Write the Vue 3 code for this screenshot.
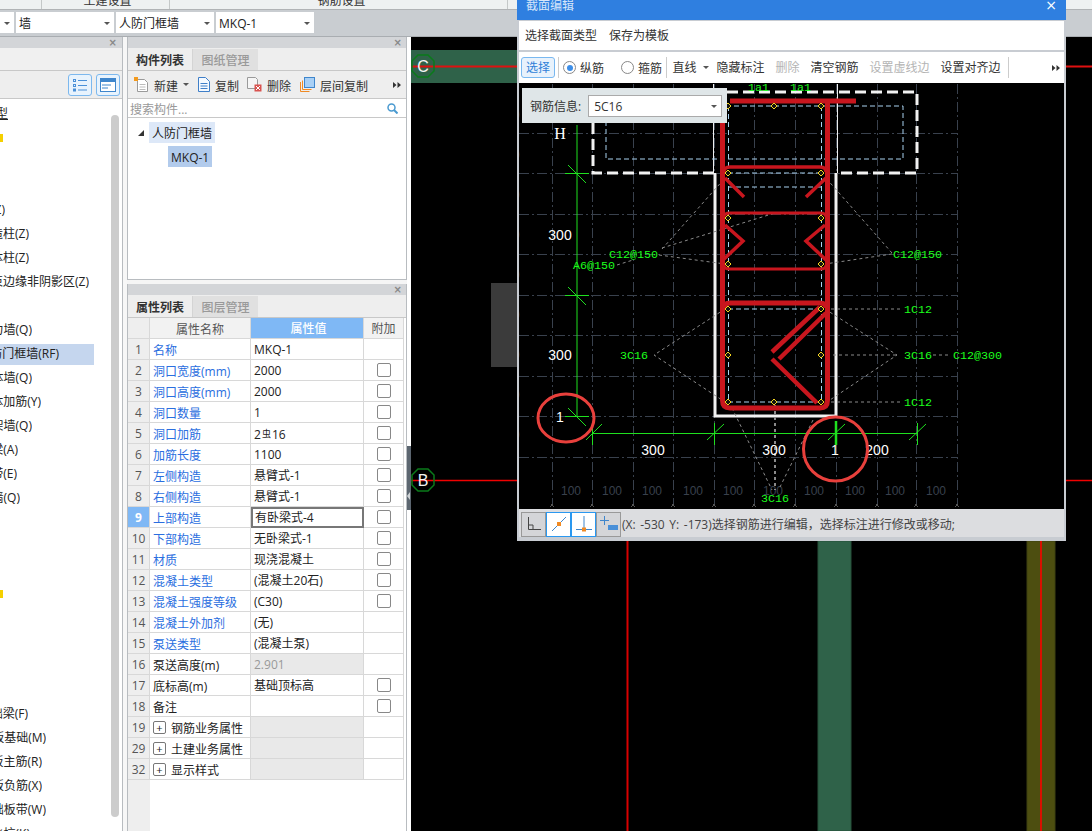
<template>
  <div class="app">
    <!-- clipped menu bar -->
    <div class="topbar">
      <div class="top-cell" style="width: 42px"></div>
      <div class="top-cell c1"><span>土建设置</span></div>
      <div class="top-cell c2"><span>钢筋设置</span></div>
    </div>

    <div class="selects">
      <div class="sel first"><i class="caret"></i></div>
      <div class="sel"><span>墙</span><i class="caret"></i></div>
      <div class="sel"><span>人防门框墙</span><i class="caret"></i></div>
      <div class="sel"><span>MKQ-1</span><i class="caret"></i></div>
    </div>

    <div class="main">
      <!-- left tree, cut by the window edge -->
      <div class="side">
        <div class="pane-head"><span class="close">×</span></div>
        <div class="side-blank"></div>
        <div class="side-tools">
          <span class="view-btn">
            <svg width="14" height="14" viewBox="0 0 14 14" fill="none" stroke="#4a90d8">
              <rect x="0.5" y="1.5" width="2" height="2" />
              <rect x="0.5" y="6.5" width="2" height="2" />
              <rect x="0.5" y="11" width="2" height="2" />
              <path d="M5 2.5h9M5 7.5h9M5 12h9" />
            </svg>
          </span>
          <span class="view-btn">
            <svg width="16" height="14" viewBox="0 0 16 14">
              <rect x="0.5" y="0.5" width="15" height="13" fill="#fff" stroke="#3f86cc" />
              <rect x="0" y="0" width="16" height="4" fill="#3f86cc" />
              <path d="M2 7h9M2 10h6" stroke="#3f86cc" />
            </svg>
          </span>
        </div>
        <div class="side-list">
          <div v-for="(item, i) in treeItems" :key="i" class="tree-row">
            <div
              class="tree-text"
              :class="{ on: item.on }"
              :style="{ width: item.on ? '94px' : item.end + 'px' }"
            >
              <span
                v-if="item.text"
                :class="{ under: item.under }"
                :style="item.on ? { marginRight: 94 - item.end + 'px' } : null"
              >{{ item.text }}</span>
              <i v-if="item.mark" class="mark"></i>
            </div>
          </div>
          <div class="side-scroll"></div>
        </div>
      </div>

      <div class="gutter"></div>

      <!-- component list + properties -->
      <div class="mid">
        <div class="pane comp">
          <div class="pane-head"><span class="close">×</span></div>
          <div class="tabs">
            <div class="tab active">构件列表</div>
            <div class="tab">图纸管理</div>
          </div>
          <div class="comp-tools">
            <span class="tool" style="margin-left: 6px">
              <svg width="15" height="15" viewBox="0 0 15 15" fill="none">
                <path d="M3.5 2.5h7l3 3v9h-10z" fill="#fff" stroke="#9a9a9a" />
                <path d="M5.5 7.5h6M5.5 10h6M5.5 12.5h6" stroke="#bcbcbc" />
                <path d="M0 0h4v4h-4z" fill="#f39a1e" />
              </svg>
              <span>新建</span>
            </span>
            <i class="caret small" style="margin: 0 8px 0 5px"></i>
            <span class="tool">
              <svg width="13" height="15" viewBox="0 0 13 15" fill="none" stroke="#3f7fc8">
                <path d="M1.5 0.5h7l4 4v10h-11z" fill="#f4f9ff" />
                <path d="M3.5 6.5h7M3.5 9h7M3.5 11.5h7" />
              </svg>
              <span>复制</span>
            </span>
            <span class="tool" style="margin-left: 8px">
              <svg width="15" height="15" viewBox="0 0 15 15">
                <path d="M0.5 0.5h8l2 2v9h-10z" fill="#f5f5f5" stroke="#9a9a9a" />
                <rect x="7.5" y="7.5" width="7" height="7" fill="#d9534f" />
                <path d="M9 9l4 4M13 9l-4 4" stroke="#fff" />
              </svg>
              <span>删除</span>
            </span>
            <span class="tool" style="margin-left: 9px">
              <svg width="15" height="15" viewBox="0 0 15 15">
                <path d="M0.5 5v9.5h9M2.5 3.5v9h9" fill="none" stroke="#f08a24" />
                <rect x="4.5" y="0.5" width="10" height="10" fill="#a9d0f5" stroke="#3f86cc" />
              </svg>
              <span>层间复制</span>
            </span>
            <svg class="more" width="8" height="6" viewBox="0 0 8 6" fill="#333">
              <path d="M0 0l3.500 3-3.500 3zM4.500 0l3.500 3-3.500 3z" />
            </svg>
          </div>
          <div class="search">
            <span>搜索构件...</span>
            <svg width="11" height="11" viewBox="0 0 11 11" fill="none" stroke="#4a9ad0" stroke-width="1.5">
              <circle cx="4.5" cy="4.5" r="3.5" />
              <path d="M7 7l3.500 3.500" stroke-width="2" />
            </svg>
          </div>
          <div class="comp-tree">
            <div class="node-row">
              <i class="tri"></i>
              <span class="node">人防门框墙</span>
            </div>
            <div class="node-row child">
              <span class="node picked">MKQ-1</span>
            </div>
          </div>
        </div>

        <div class="pane props">
          <div class="pane-head"><span class="close">×</span></div>
          <div class="tabs">
            <div class="tab active">属性列表</div>
            <div class="tab">图层管理</div>
          </div>
          <div class="grid-row head">
            <div class="c-idx"></div>
            <div class="c-name center">属性名称</div>
            <div class="c-val hl">属性值</div>
            <div class="c-add center">附加</div>
          </div>
          <div v-for="row in rows" :key="row.n" class="grid-row">
            <div class="c-idx" :class="{ cur: row.cur }">{{ row.n }}</div>
            <div class="c-name" :class="{ link: row.link }">
              <i v-if="row.group" class="plus">+</i>
              <span :class="{ 'group-text': row.group }">{{ row.name }}</span>
            </div>
            <div class="c-val" :class="{ gray: row.gray, edit: row.cur, dim: row.dim }">
              <template v-if="row.rebar">2<span class="rebar">虫</span>16</template>
              <template v-else>{{ row.val }}</template>
            </div>
            <div class="c-add"><i v-if="row.check" class="box"></i></div>
          </div>
          <div class="grid-rest"><div class="rest-idx"></div></div>
        </div>
      </div>

      <div class="handle"><div class="handle-bar"><i></i></div></div>

      <!-- CAD background -->
      <div class="canvas">
        <svg class="bg" width="681" height="794" viewBox="411 37 681 794">
          <rect x="411" y="50" width="106" height="33" fill="#2f6249" />
          <rect x="491" y="283" width="26" height="84" fill="#3b3b3b" />
          <rect x="818" y="541" width="33" height="290" fill="#2f6249" stroke="#26503b" />
          <rect x="1027" y="541" width="28" height="290" fill="#4d4e10" stroke="#3f4010" />
          <path d="M411 66.5H517M1066 66.5H1092" stroke="#e01010" stroke-width="2" />
          <path d="M411 480.5H517M1066 480.5H1092" stroke="#f00000" stroke-width="1.5" />
          <path d="M627.5 541V831" stroke="#d80000" stroke-width="2" />
          <path d="M1041 541V831" stroke="#d81000" stroke-width="2" />
          <polygon points="418,55 428,55 434,61 434,71 428,77 418,77 412,71 412,61" fill="none" stroke="#0a7a1a" stroke-width="1.5" />
          <polygon points="418,469 428,469 434,475 434,485 428,491 418,491 412,485 412,475" fill="none" stroke="#0a7a1a" stroke-width="1.5" />
          <text x="423" y="72" class="axis">C</text>
          <text x="423" y="486" class="axis">B</text>
        </svg>

        <!-- section editor window -->
        <div class="dialog">
          <div class="title">
            <span>截面编辑</span>
            <span class="title-x">×</span>
          </div>
          <div class="bar one">
            <span class="btn">选择截面类型</span>
            <span class="btn">保存为模板</span>
          </div>
          <div class="bar two">
            <span class="btn pick">选择</span>
            <i class="sep"></i>
            <label class="radio"><i class="dot on"></i>纵筋</label>
            <label class="radio wide"><i class="dot"></i>箍筋</label>
            <i class="sep last"></i>
            <span class="btn">直线</span>
            <i class="caret small" style="margin-left: 1px"></i>
            <span class="btn" style="margin-left: 2px">隐藏标注</span>
            <span class="btn off">删除</span>
            <span class="btn">清空钢筋</span>
            <span class="btn off">设置虚线边</span>
            <span class="btn">设置对齐边</span>
            <i class="sep" style="margin-left: 2px"></i>
            <svg class="bar-more" width="8" height="6" viewBox="0 0 8 6" fill="#333">
              <path d="M0 0l3.500 3-3.500 3zM4.500 0l3.500 3-3.500 3z" />
            </svg>
          </div>

          <div class="draw">
            <svg width="545" height="426" viewBox="519 83 545 426">
              <!-- grid -->
              <g stroke="#39414d" stroke-dasharray="10 3 2 3" fill="none">
                <path v-for="x in gridX" :key="'gx' + x" :d="`M${x + 0.5} 84V506`" />
                <path v-for="y in gridY" :key="'gy' + y" :d="`M519 ${y + 0.5}H958`" />
              </g>
              <text v-for="x in dimX" :key="'d' + x" :x="x" y="495" class="dim-text">100</text>
              <text v-for="y in dimY" :key="'e' + y" x="513" :y="y" class="dim-side">0</text>
              <path
                v-for="x in gridX"
                :key="'t' + x"
                :d="`M${x - 2} 507l3 -3M${x + 2} 507l-3 -3`"
                stroke="#555"
              />

              <!-- flange -->
              <path d="M714 173H593V92H917V173H836" fill="none" stroke="#f2f2f2" stroke-width="3" stroke-dasharray="11 5" />
              <path d="M713.5 84V173M837.5 84V173" stroke="#eee" />
              <path d="M715 173V416H836V173" fill="none" stroke="#f2f2f2" stroke-width="3" />
              <g stroke="#a9d2f0" stroke-dasharray="5 3" fill="none">
                <path d="M606 106H903V159H606Z" />
                <path d="M728.5 106V402M821.5 106V402" />
                <path d="M728 173H821M728 187H821M728 309H821M728 402H821" />
              </g>

              <!-- leaders -->
              <g stroke="#8a8a8a" stroke-dasharray="3 3" fill="none">
                <path d="M662 249L725 178M659 255L725 264M662 248L775 213M617 265L633 260" />
                <path d="M892 253L825 177M892 254L825 264" />
                <path d="M900 309H825M900 402H827" />
                <path d="M725 309L654 355L725 402" />
                <path d="M825 309L897 355L827 402M827 355H897M933 355H950" />
                <path d="M732 408L772 490M813 420L780 487" />
              </g>
              <path d="M775 405V490" stroke="#8a8a8a" stroke-width="2" stroke-dasharray="3 3" />

              <!-- rebar -->
              <g fill="none" stroke="#c8161e">
                <path d="M730 101H856" stroke-width="5" />
                <path d="M722.5 110V400Q722.5 408 730 408H820Q827.5 408 827.5 400V101" stroke-width="5" />
                <path d="M724 172Q724 167 730 167H820Q826 167 826 172" stroke-width="3.5" />
                <path d="M725 178L744 197M826 178L806 197" stroke-width="3.5" />
                <path d="M724 217Q724 213 730 213H820Q826 213 826 217" stroke-width="3" />
                <path d="M725 225L743 241L723 260M825 225L806 241L826 260" stroke-width="3.5" />
                <path d="M724 265Q724 269 730 269H820Q826 269 826 265" stroke-width="3" />
                <path d="M724 308Q724 303 730 303H820Q826 303 826 308" stroke-width="5" />
                <path d="M820 307L772 352M826 313L779 359M772 359L817 403" stroke-width="4.5" />
              </g>
              <g fill="#111" stroke="#f2d320">
                <polygon
                  v-for="(p, i) in nodes"
                  :key="'n' + i"
                  :points="`${p[0]},${p[1] - 3} ${p[0] + 3},${p[1]} ${p[0]},${p[1] + 3} ${p[0] - 3},${p[1]}`"
                />
              </g>

              <!-- dimensions -->
              <g stroke="#1fe01f" fill="none">
                <path d="M577 125V416" />
                <path d="M565 173.5H589M568 165L586 183M565 295.5H589M568 287L586 305M565 416.5H589M568 408L586 426" />
                <path d="M592 433.5H917" />
                <path d="M592.5 423V445M586 440L602 424M714.5 423V445M707 440L724 424M828 440L845 424M917.5 423V445M909 440L926 424" />
                <path d="M836 421V445" stroke-width="2.5" />
              </g>
              <text x="560" y="139" class="white serif">H</text>
              <text x="560" y="240" class="white">300</text>
              <text x="560" y="360" class="white">300</text>
              <text x="560" y="422" class="white">1</text>
              <text x="653" y="455" class="white">300</text>
              <text x="774" y="455" class="white">300</text>
              <text x="835" y="455" class="white">1</text>
              <text x="877" y="455" class="white">200</text>

              <text
                v-for="(t, i) in greenLabels"
                :key="'g' + i"
                :x="t.x"
                :y="t.y"
                class="green"
              >{{ t.text }}</text>

              <ellipse cx="566" cy="418" rx="28" ry="24" fill="none" stroke="#e8403c" stroke-width="3" />
              <circle cx="835.5" cy="449" r="32" fill="none" stroke="#e8403c" stroke-width="3" />
            </svg>

            <div class="info">
              <span>钢筋信息:</span>
              <div class="info-sel"><span>5C16</span><i class="caret small"></i></div>
            </div>
          </div>

          <div class="status">
            <span class="st-btn">
              <svg width="16" height="16" viewBox="0 0 16 16" fill="none" stroke="#444">
                <path d="M2.5 1V13.5H15M2.5 9H7V13.5" />
              </svg>
            </span>
            <span class="st-btn lit">
              <svg width="16" height="16" viewBox="0 0 16 16" fill="none">
                <path d="M1 15L15 1" stroke="#3f86cc" />
                <rect x="6" y="6" width="4" height="4" fill="#f08a24" />
              </svg>
            </span>
            <span class="st-btn lit">
              <svg width="16" height="16" viewBox="0 0 16 16" fill="none">
                <path d="M8 0V13M0 13.5H16" stroke="#3f86cc" />
                <rect x="6" y="11.5" width="4" height="4" fill="#f08a24" />
              </svg>
            </span>
            <span class="st-btn">
              <svg width="18" height="16" viewBox="0 0 18 16" fill="none">
                <path d="M4.5 0V9M0 4.5H9" stroke="#3f86cc" />
                <rect x="8" y="9" width="10" height="5" fill="#4a90d8" />
              </svg>
            </span>
            <span class="st-text">(X: -530 Y: -173)选择钢筋进行编辑，选择标注进行修改或移动;</span>
          </div>
        </div>
      </div>
    </div>
  </div>
</template>

<script setup>
const blank = { text: "", end: 0 };
const treeItems = [
  { text: "类型", end: 8, under: true },
  { text: "", end: 3, mark: true },
  blank,
  blank,
  { text: "柱(Z)", end: 5 },
  { text: "构造柱(Z)", end: 29 },
  { text: "砌体柱(Z)", end: 29 },
  { text: "约束边缘非阴影区(Z)", end: 89 },
  blank,
  { text: "剪力墙(Q)", end: 32 },
  { text: "人防门框墙(RF)", end: 59, on: true },
  { text: "砌体墙(Q)", end: 32 },
  { text: "砌体加筋(Y)", end: 41 },
  { text: "框架墙(Q)", end: 32 },
  { text: "暗梁(A)", end: 18 },
  { text: "暗带(E)", end: 17 },
  { text: "墙(Q)", end: 20 },
  blank,
  blank,
  blank,
  { text: "", end: 3, mark: true },
  blank,
  blank,
  blank,
  blank,
  { text: "基础梁(F)", end: 28 },
  { text: "筏板基础(M)", end: 46 },
  { text: "筏板主筋(R)", end: 42 },
  { text: "筏板负筋(X)", end: 42 },
  { text: "基础板带(W)", end: 46 },
  { text: "集水坑(K)", end: 30 },
];

const rows = [
  { n: 1, name: "名称", val: "MKQ-1", link: true },
  { n: 2, name: "洞口宽度(mm)", val: "2000", link: true, check: true },
  { n: 3, name: "洞口高度(mm)", val: "2000", link: true, check: true },
  { n: 4, name: "洞口数量", val: "1", link: true, check: true },
  { n: 5, name: "洞口加筋", rebar: true, link: true, check: true },
  { n: 6, name: "加筋长度", val: "1100", link: true, check: true },
  { n: 7, name: "左侧构造", val: "悬臂式-1", link: true, check: true },
  { n: 8, name: "右侧构造", val: "悬臂式-1", link: true, check: true },
  { n: 9, name: "上部构造", val: "有卧梁式-4", link: true, check: true, cur: true },
  { n: 10, name: "下部构造", val: "无卧梁式-1", link: true, check: true },
  { n: 11, name: "材质", val: "现浇混凝土", link: true, check: true },
  { n: 12, name: "混凝土类型", val: "(混凝土20石)", link: true, check: true },
  { n: 13, name: "混凝土强度等级", val: "(C30)", link: true, check: true },
  { n: 14, name: "混凝土外加剂", val: "(无)", link: true },
  { n: 15, name: "泵送类型", val: "(混凝土泵)", link: true },
  { n: 16, name: "泵送高度(m)", val: "2.901", gray: true, dim: true },
  { n: 17, name: "底标高(m)", val: "基础顶标高", check: true },
  { n: 18, name: "备注", val: "", check: true },
  { n: 19, name: "钢筋业务属性", val: "", group: true, gray: true },
  { n: 29, name: "土建业务属性", val: "", group: true, gray: true },
  { n: 32, name: "显示样式", val: "", group: true, gray: true },
];

const gridX = [552, 592, 633, 673, 714, 754, 795, 836, 877, 916, 957];
const gridY = [133, 173, 214, 254, 295, 335, 376, 416, 457];
const dimX = [561, 602, 642, 683, 723, 763, 804, 845, 885, 926];
const dimY = [119, 159, 199, 239, 279, 319, 359, 399, 439];

const nodes = [
  [728, 106], [774, 106], [821, 106],
  [728, 173], [821, 173],
  [728, 218], [821, 218],
  [728, 264], [821, 264],
  [728, 309], [821, 309],
  [728, 355], [821, 355],
  [728, 402], [774, 402], [821, 402],
];

const greenLabels = [
  { text: "C12@150", x: 609, y: 258 },
  { text: "A6@150", x: 573, y: 269 },
  { text: "C12@150", x: 893, y: 258 },
  { text: "1C12", x: 904, y: 313 },
  { text: "1C12", x: 904, y: 406 },
  { text: "3C16", x: 620, y: 359 },
  { text: "3C16", x: 904, y: 359 },
  { text: "C12@300", x: 953, y: 359 },
  { text: "3C16", x: 761, y: 502 },
  { text: "1a1", x: 748, y: 91 },
  { text: "1a1", x: 790, y: 91 },
];
</script>

<style scoped>
.app {
  width: 1092px;
  height: 831px;
  overflow: hidden;
  display: flex;
  flex-direction: column;
  font-family: "Open Sans", "Noto Sans CJK SC", sans-serif;
  font-size: 12px;
  color: #333;
  background: #f5f5f5;
}

.topbar {
  height: 10px;
  display: flex;
  background: #eef1f1;
  border-bottom: 1px solid #b0b3b5;
  box-sizing: border-box;
  overflow: hidden;
}
.top-cell {
  border-right: 1px solid #c4c8c8;
  line-height: 12px;
  box-sizing: border-box;
}
.top-cell span {
  display: block;
  margin-top: -5px;
  text-align: center;
}
.c1 {
  width: 128px;
  padding-left: 4px;
}
.c2 {
  width: 338px;
  padding-left: 6px;
}

.selects {
  height: 27px;
  display: flex;
  gap: 2px;
  align-items: center;
  background: #c9cdd1;
  border-bottom: 1px solid #a9adb1;
  box-sizing: border-box;
  padding-bottom: 1px;
}
.sel {
  width: 98px;
  height: 21px;
  background: #fff;
  display: flex;
  align-items: center;
  justify-content: space-between;
  padding: 1px 4px 0 3px;
  box-sizing: border-box;
  color: #222;
}
.sel.first {
  width: 14px;
  justify-content: flex-end;
}
.caret {
  width: 0;
  height: 0;
  border-left: 3px solid transparent;
  border-right: 3px solid transparent;
  border-top: 3px solid #555;
  display: inline-block;
}

.main {
  flex: 1;
  display: flex;
  min-height: 0;
}

.side {
  width: 123px;
  display: flex;
  flex-direction: column;
  border-right: 1px solid #b8bcc0;
  box-sizing: border-box;
  background: #fff;
}
.pane-head {
  height: 11px;
  flex: none;
  background: #d3d5d8;
  display: flex;
  justify-content: flex-end;
  align-items: center;
  padding-right: 4px;
}
.close {
  font-family: "DejaVu Sans", sans-serif;
  font-size: 10px;
  line-height: 11px;
  font-weight: bold;
  color: #888;
}
.side .close {
  margin-right: 1px;
}
.side-blank {
  height: 22px;
  background: #f0f0f0;
  border-bottom: 1px solid #c8c8c8;
}
.side-tools {
  height: 28px;
  flex: none;
  display: flex;
  gap: 4px;
  align-items: center;
  justify-content: flex-end;
  padding-right: 2px;
  background: #eee;
  border-bottom: 1px solid #c8c8c8;
  box-sizing: border-box;
}
.view-btn {
  width: 22px;
  height: 20px;
  border: 1px solid #7cb8ee;
  border-radius: 3px;
  background: #e8f3fd;
  display: flex;
  align-items: center;
  justify-content: center;
}
.side-list {
  flex: 1;
  position: relative;
  overflow: hidden;
  padding-top: 3px;
}
.tree-row {
  height: 24px;
  display: flex;
  align-items: center;
}
.tree-text {
  height: 21px;
  display: flex;
  justify-content: flex-end;
  align-items: center;
  white-space: nowrap;
  overflow: hidden;
  color: #222;
  flex: none;
}
.tree-text span {
  margin-top: -2px;
}
.tree-text.on {
  background: #c5d6ee;
}
.under {
  text-decoration: underline;
}
.mark {
  width: 3px;
  height: 8px;
  background: #f5d000;
  display: block;
}
.side-scroll {
  position: absolute;
  left: 111px;
  top: 16px;
  width: 8px;
  height: 702px;
  border-radius: 4px;
  background: #ccc;
}

.gutter {
  width: 4px;
  background: #f7f7f7;
}

.mid {
  width: 280px;
  display: flex;
  flex-direction: column;
  gap: 4px;
}
.pane {
  border: solid #b8bcc0;
  border-width: 0 1px;
  display: flex;
  flex-direction: column;
  background: #fff;
  box-sizing: border-box;
}
.pane.comp {
  height: 243px;
  border-bottom-width: 1px;
}
.pane.props {
  flex: 1;
  min-height: 0;
}
.tabs {
  height: 23px;
  flex: none;
  display: flex;
  background: #eee;
  padding-top: 1px;
  box-sizing: border-box;
  border-bottom: 1px solid #c8c8c8;
}
.tab {
  width: 65px;
  text-align: center;
  line-height: 24px;
  color: #999;
  background: #e0e0e0;
  font-weight: 500;
}
.tab.active {
  color: #333;
  background: #eee;
  font-weight: 700;
  border-right: 1px solid #d4d4d4;
  box-sizing: border-box;
}
.comp-tools {
  height: 28px;
  flex: none;
  display: flex;
  align-items: center;
  background: #eee;
  border-bottom: 1px solid #c8c8c8;
  box-sizing: border-box;
  position: relative;
}
.tool {
  display: flex;
  align-items: center;
  gap: 5px;
}
.tool span {
  padding-top: 2px;
}
.more {
  position: absolute;
  left: 265px;
  top: 11px;
}
.search {
  height: 19px;
  flex: none;
  display: flex;
  justify-content: space-between;
  align-items: center;
  padding: 1px 8px 0 2px;
  color: #999;
  border-bottom: 1px solid #c8c8c8;
  box-sizing: border-box;
}
.comp-tree {
  flex: 1;
  padding-top: 4px;
}
.node-row {
  height: 21px;
  margin-bottom: 3px;
  display: flex;
  align-items: center;
  padding-left: 10px;
}
.node-row.child {
  padding-left: 40px;
}
.tri {
  width: 0;
  height: 0;
  border-bottom: 6px solid #333;
  border-left: 6px solid transparent;
  margin-right: 5px;
}
.node {
  height: 21px;
  line-height: 23px;
  padding: 0 3px;
  background: #dde8f8;
  color: #222;
}
.node.picked {
  background: #b2cbec;
}

.grid-row {
  height: 21px;
  flex: none;
  display: flex;
  margin-right: 2px;
  border-bottom: 1px solid #d8d8d8;
  box-sizing: border-box;
  color: #222;
}
.grid-row.head {
  color: #555;
  background: #f2f2f2;
}
.c-idx {
  width: 22px;
  flex: none;
  background: #eee;
  text-align: center;
  line-height: 22px;
  color: #555;
  border-right: 1px solid #d8d8d8;
  box-sizing: border-box;
}
.c-idx.cur {
  background: #7fb8f5;
  color: #fff;
  font-weight: 700;
}
.c-name {
  width: 101px;
  flex: none;
  display: flex;
  align-items: center;
  padding: 1px 0 0 3px;
  box-sizing: border-box;
  border-right: 1px solid #d8d8d8;
  white-space: nowrap;
}
.c-name.link {
  color: #2a6ee0;
}
.c-val {
  width: 113px;
  flex: none;
  padding-left: 3px;
  line-height: 22px;
  box-sizing: border-box;
  border-right: 1px solid #d8d8d8;
}
.c-val.gray {
  background: #e9e9e9;
}
.c-val.dim {
  color: #999;
}
.c-val.edit {
  border: 2px solid #777;
  padding-left: 2px;
  line-height: 18px;
  height: 21px;
}
.c-val.hl {
  background: #7fb8f5;
  color: #fff;
  text-align: center;
  font-weight: 500;
}
.c-add {
  flex: 1;
  display: flex;
  align-items: center;
  justify-content: center;
  border-right: 1px solid #d8d8d8;
}
.center {
  justify-content: center;
  text-align: center;
  padding-left: 0;
}
.rebar {
  font-size: 9px;
  vertical-align: 2px;
  margin: 0 1px;
}
.box {
  width: 12px;
  height: 12px;
  border: 1px solid #888;
  border-radius: 2px;
  background: #fff;
  display: block;
}
.plus {
  width: 11px;
  height: 11px;
  border: 1px solid #777;
  border-radius: 2px;
  display: flex;
  align-items: center;
  justify-content: center;
  font-style: normal;
  font-size: 11px;
  line-height: 11px;
  flex: none;
  margin-right: 5px;
}
.group-text {
  color: #222;
}
.grid-rest {
  flex: 1;
  background: #fff;
}
.rest-idx {
  width: 22px;
  height: 100%;
  background: #eee;
}

.handle {
  width: 4px;
  background: #fff;
  position: relative;
}
.handle-bar {
  position: absolute;
  left: 0;
  top: 409px;
  width: 4px;
  height: 64px;
  background: #5c6670;
}
.handle-bar i {
  position: absolute;
  left: 0;
  top: 46px;
  width: 0;
  height: 0;
  border-top: 4px solid transparent;
  border-bottom: 4px solid transparent;
  border-right: 3px solid #cfd3d6;
}

.canvas {
  flex: 1;
  position: relative;
  background: #000;
}
.bg {
  position: absolute;
  left: 0;
  top: 0;
}
.axis {
  font-family: "Liberation Sans", sans-serif;
  font-size: 16px;
  fill: #f4f4f4;
  text-anchor: middle;
}

.dialog {
  position: absolute;
  left: 106px;
  top: -37px;
  width: 549px;
  height: 541px;
  display: flex;
  flex-direction: column;
  background: #c8ccd2;
  padding: 0 2px 4px 2px;
  box-sizing: border-box;
}
.title {
  height: 20px;
  flex: none;
  margin: 0 -2px 1px;
  padding: 0 9px;
  background: #2f7fe0;
  color: #d6e6fa;
  display: flex;
  justify-content: space-between;
  align-items: flex-start;
  line-height: 12px;
  overflow: hidden;
}
.title-x {
  color: #fff;
  font-family: "DejaVu Sans", sans-serif;
  font-size: 14px;
  margin-top: -1px;
}
.bar {
  background: #fff;
  display: flex;
  align-items: center;
  flex: none;
  white-space: nowrap;
}
.bar.one {
  height: 29px;
  margin-bottom: 2px;
}
.bar.two {
  height: 31px;
  padding-left: 2px;
  position: relative;
}
.btn {
  padding: 0 5.5px;
  height: 21px;
  line-height: 21px;
  color: #333;
  flex: none;
  box-sizing: border-box;
}
.bar.one .btn {
  padding: 0 6px;
}
.btn.off {
  color: #b4b4b4;
}
.btn.pick {
  width: 34px;
  padding: 0;
  text-align: center;
  line-height: 19px;
  border: 1px solid #79b8f0;
  border-radius: 3px;
  background: #e8f2fc;
  color: #2f7fd8;
}
.sep {
  width: 1px;
  height: 21px;
  background: #ccc;
  margin: 0 4px 0 3px;
  flex: none;
}
.sep.last {
  margin: 0;
}
.radio {
  display: flex;
  align-items: center;
  gap: 4px;
  width: 44px;
}
.radio.wide {
  margin-left: 14px;
  margin-right: 1px;
}
.dot {
  width: 13px;
  height: 13px;
  border: 1px solid #888;
  border-radius: 50%;
  box-sizing: border-box;
  flex: none;
  position: relative;
}
.dot.on::after {
  content: "";
  position: absolute;
  left: 2.5px;
  top: 2.5px;
  width: 6px;
  height: 6px;
  border-radius: 50%;
  background: #3c8ee8;
}
.bar-more {
  position: absolute;
  left: 533px;
  top: 13px;
}
.draw {
  flex: 1;
  position: relative;
  background: #000;
  overflow: hidden;
  min-height: 0;
}
.draw svg {
  display: block;
}
.dim-text,
.dim-side {
  font-family: "Liberation Sans", sans-serif;
  font-size: 12px;
  fill: #39414d;
}
.white {
  font-family: "Liberation Sans", sans-serif;
  font-size: 14px;
  fill: #fff;
  text-anchor: middle;
}
.white.serif {
  font-family: "Liberation Serif", serif;
  font-size: 16px;
}
.green {
  font-family: "Liberation Mono", monospace;
  font-size: 11.7px;
  fill: #1cff1c;
}
.info {
  position: absolute;
  left: 3px;
  top: 5px;
  width: 205px;
  height: 35px;
  background: #dfe6e8;
  display: flex;
  align-items: center;
  gap: 7px;
  padding-left: 8px;
  box-sizing: border-box;
}
.info-sel {
  width: 134px;
  height: 22px;
  background: #fff;
  border: 1px solid #aaa;
  box-sizing: border-box;
  display: flex;
  align-items: center;
  justify-content: space-between;
  padding: 1px 4px 0 5px;
}
.caret.small {
  flex: none;
}
.status {
  height: 28px;
  flex: none;
  background: #dcdde0;
  display: flex;
  align-items: center;
  padding-left: 2px;
  padding-top: 2px;
  box-sizing: border-box;
}
.st-btn {
  width: 25px;
  height: 25px;
  border: 1px solid #999;
  box-sizing: border-box;
  background: #d4d5d8;
  display: flex;
  align-items: center;
  justify-content: center;
  flex: none;
}
.st-btn.lit {
  background: #fff;
  border-color: #2a98f0;
}
.st-text {
  color: #444;
  margin-left: 1px;
  white-space: nowrap;
  word-spacing: 1.5px;
}
</style>
